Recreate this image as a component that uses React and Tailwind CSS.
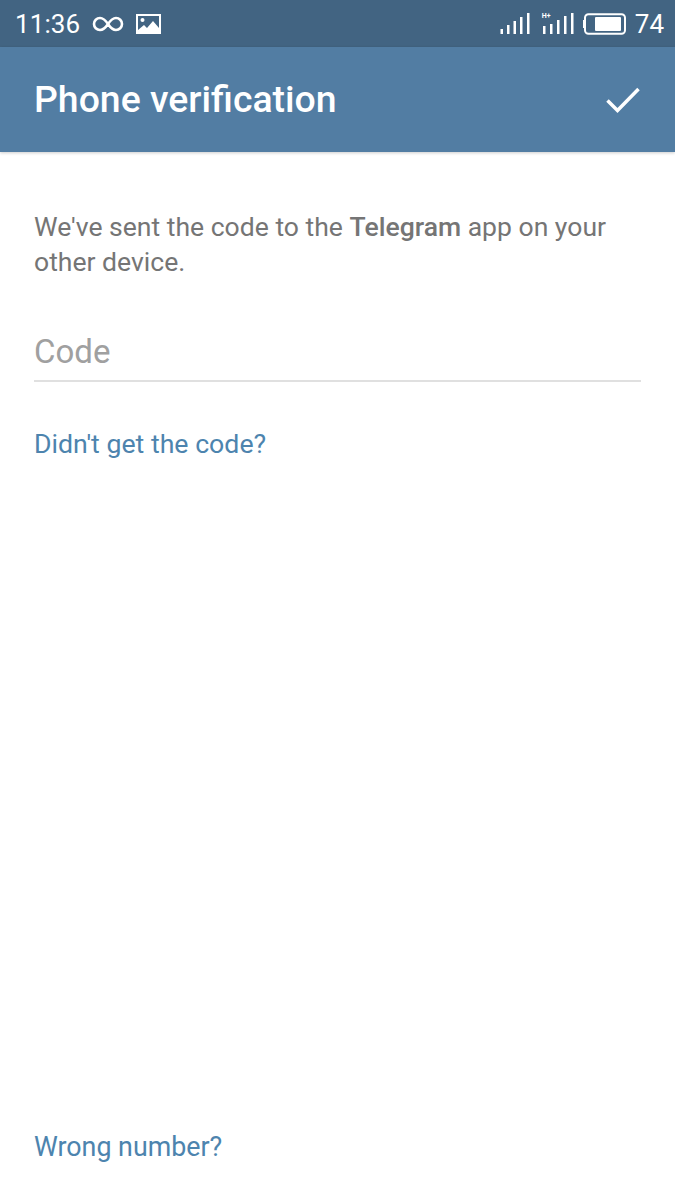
import React from "react";

function StatusBar() {
  return (
    <div className="h-[47px] bg-[#426482] flex items-center justify-between pl-[15px] pr-[11px] text-white">
      <div className="flex items-center">
        <span className="text-[26px] leading-none tracking-[0.100px] mr-[12px]">11:36</span>
        <svg width="32" height="16" viewBox="0 0 32 16" fill="none" stroke="white" strokeWidth="2.600" className="mr-[12px]">
          <path d="M16 8C13 3.500 11 2 8 2a6 6 0 0 0 0 12c3 0 5-1.500 8-6c3-4.500 5-6 8-6a6 6 0 0 1 0 12c-3 0-5-1.500-8-6z" />
        </svg>
        <svg width="25" height="20" viewBox="0 0 25 20">
          <path fillRule="evenodd" fill="white" d="M0 0h25v20H0zM2 2v14l6-5 3 3 6-7 6 7V2z" />
          <circle cx="6.500" cy="6" r="2" fill="white" />
        </svg>
      </div>
      <div className="flex items-center">
        <svg width="32" height="22" viewBox="0 0 32 22" fill="white" className="mr-[10px]">
          <rect x="0.500" y="16" width="2.500" height="5" />
          <rect x="7" y="12" width="2.500" height="9" />
          <rect x="13.500" y="8" width="2.500" height="13" />
          <rect x="20" y="4" width="2.500" height="17" />
          <rect x="27" y="0" width="2.500" height="21" />
        </svg>
        <div className="relative mr-[9px]">
          <span className="absolute left-0 top-0 text-[7px] leading-none font-bold">H+</span>
          <svg width="32" height="22" viewBox="0 0 32 22" fill="white">
            <rect x="1" y="13" width="2.500" height="8" />
            <rect x="8" y="11" width="2.500" height="10" />
            <rect x="15" y="7" width="2.500" height="14" />
            <rect x="22" y="3" width="2.500" height="18" />
            <rect x="29" y="0" width="2.500" height="21" />
          </svg>
        </div>
        <svg width="43" height="22" viewBox="0 0 43 22" fill="none" className="mr-[9px]">
          <rect x="2" y="1.250" width="40" height="19.500" rx="3.500" stroke="white" strokeWidth="2" />
          <rect x="0" y="7" width="1.500" height="8" fill="white" />
          <rect x="12" y="4" width="26" height="14" rx="1" fill="white" />
        </svg>
        <span className="text-[26px] leading-none">74</span>
      </div>
    </div>
  );
}

function Header() {
  return (
    <div className="h-[105px] bg-[#527da3] flex items-center justify-between pl-[34px] pr-[35px] shadow-[0_1px_3px_rgba(0,0,0,0.2)]">
      <h1 className="text-white text-[37.400px] font-medium leading-none">Phone verification</h1>
      <svg width="34" height="26" viewBox="0 0 34 26" fill="none" stroke="white" strokeWidth="3.500">
        <path d="M1.500 13.500 11.500 23.500 32.500 2" />
      </svg>
    </div>
  );
}

export default function App() {
  return (
    <div className="w-[675px] h-[1200px] bg-white flex flex-col font-['Roboto',sans-serif]">
      <StatusBar />
      <Header />
      <div className="flex-1 flex flex-col px-[34px] pt-[57px] pb-[35px]">
        <p className="text-[26.550px] leading-[35px] text-[#757575]">
          We've sent the code to the <b className="font-medium">Telegram</b> app on your other device.
        </p>
        <div className="mt-[44px] h-[59px] flex items-center border-b-2 border-[#e0e0e0] text-[33px] text-[#a0a0a0]">
          Code
        </div>
        <a className="mt-[45px] text-[26.700px] leading-[35px] text-[#4d84ae]">Didn't get the code?</a>
        <a className="mt-auto text-[26.800px] leading-[35px] text-[#4d84ae]">Wrong number?</a>
      </div>
    </div>
  );
}
